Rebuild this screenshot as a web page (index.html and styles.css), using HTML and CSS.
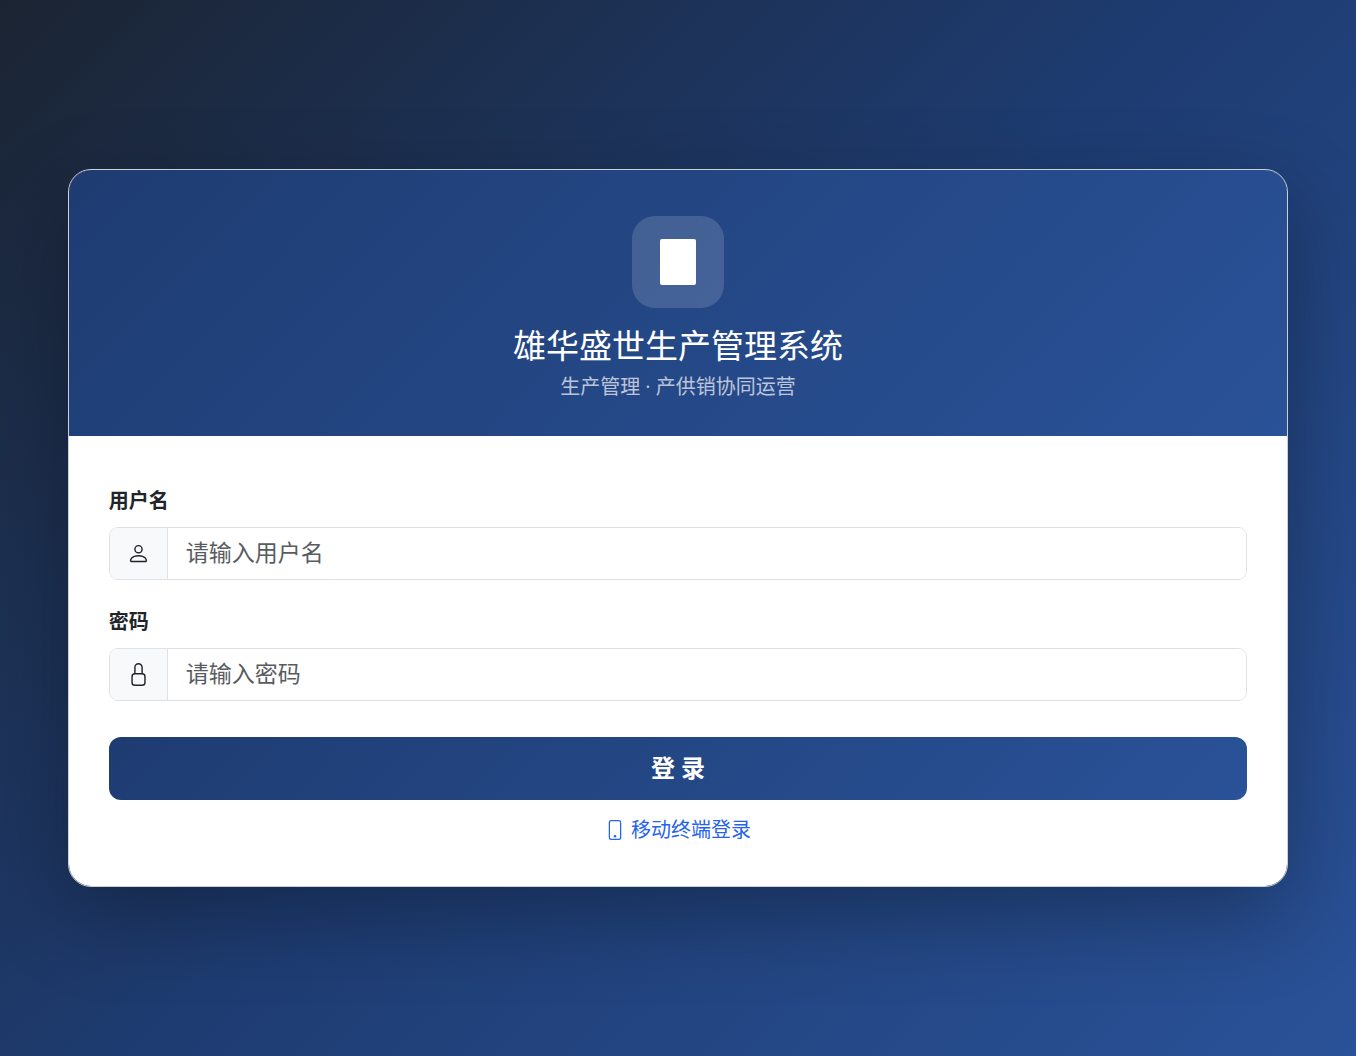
FILE: index.html
```
<!DOCTYPE html>
<html lang="zh-CN">
<head>
<meta charset="utf-8">
<meta name="viewport" content="width=device-width, initial-scale=1">
<title>雄华盛世生产管理系统</title>
<link rel="stylesheet" href="styles.css">
</head>
<body>
<main class="card">
  <header class="card-header">
    <div class="brand">
      <svg class="brand-icon" viewBox="0 0 36 46" aria-hidden="true"><rect width="36" height="46" rx="2" fill="currentColor"/></svg>
    </div>
    <h1 class="title">雄华盛世生产管理系统</h1>
    <p class="subtitle">生产管理 · 产供销协同运营</p>
  </header>
  <form class="card-body">
    <div class="field">
      <label class="label" for="username">用户名</label>
      <div class="input-group">
        <span class="addon">
          <svg class="icon" viewBox="0 0 16 16" fill="currentColor" aria-hidden="true"><path d="M8 8a3 3 0 1 0 0-6 3 3 0 0 0 0 6m2-3a2 2 0 1 1-4 0 2 2 0 0 1 4 0m4 8c0 1-1 1-1 1H3s-1 0-1-1 1-4 6-4 6 3 6 4m-1-.004c-.001-.246-.154-.986-.832-1.664C11.516 10.68 10.289 10 8 10s-3.516.68-4.168 1.332c-.678.678-.83 1.418-.832 1.664z"/></svg>
        </span>
        <input class="input" id="username" type="text" placeholder="请输入用户名">
      </div>
    </div>
    <div class="field">
      <label class="label" for="password">密码</label>
      <div class="input-group">
        <span class="addon">
          <svg class="icon" viewBox="0 0 16 16" fill="none" stroke="currentColor" aria-hidden="true"><rect x="3.500" y="7.500" width="9" height="8" rx="2"/><path d="M5.500 7.500V3a2.500 2.500 0 0 1 5 0v4.500"/></svg>
        </span>
        <input class="input" id="password" type="password" placeholder="请输入密码">
      </div>
    </div>
    <button class="submit" type="submit">登 录</button>
    <a class="mobile-link" href="#">
      <svg class="link-icon" viewBox="0 0 16 16" fill="currentColor" aria-hidden="true"><path d="M11 1a1 1 0 0 1 1 1v12a1 1 0 0 1-1 1H5a1 1 0 0 1-1-1V2a1 1 0 0 1 1-1zM5 0a2 2 0 0 0-2 2v12a2 2 0 0 0 2 2h6a2 2 0 0 0 2-2V2a2 2 0 0 0-2-2z"/><path d="M8 14a1 1 0 1 0 0-2 1 1 0 0 0 0 2"/></svg>
      <span>移动终端登录</span>
    </a>
  </form>
</main>
</body>
</html>
```
FILE: styles.css
```
* {
  box-sizing: border-box;
}

body {
  margin: 0;
  min-height: 100vh;
  display: flex;
  align-items: center;
  justify-content: center;
  background: linear-gradient(135deg, #1b2432 0%, #1e3c72 50%, #2a5298 100%);
  color: #212529;
  font-family: "Open Sans", "Noto Sans CJK SC", sans-serif;
  font-size: 23px;
}

.card {
  width: 90%;
  background: #fff;
  background-clip: padding-box;
  border: 1px solid #cbd0d0;
  border-radius: 23px;
  box-shadow: 0 29px 86px rgba(0, 0, 0, 0.3);
  overflow: hidden;
}

.card-header {
  display: flex;
  flex-direction: column;
  align-items: center;
  padding: 46px 40px 34px;
  background: linear-gradient(135deg, #1e3c72, #2a5298);
  color: #fff;
  text-align: center;
}

.brand {
  display: flex;
  align-items: center;
  justify-content: center;
  width: 92px;
  height: 92px;
  margin-bottom: 18px;
  border-radius: 23px;
  background: rgba(255, 255, 255, 0.15);
}

.brand-icon {
  width: 36px;
  height: 46px;
}

.title {
  margin: 0 0 6px;
  font-size: 33px;
  font-weight: 400;
  line-height: 40px;
}

.subtitle {
  margin: 0;
  font-size: 20px;
  line-height: 30px;
  color: rgba(255, 255, 255, 0.7);
}

.card-body {
  display: flex;
  flex-direction: column;
  padding: 50px 40px 41px;
}

.field {
  margin-bottom: 27px;
}

.label {
  display: block;
  margin-bottom: 11px;
  font-size: 20px;
  font-weight: 700;
  line-height: 30px;
}

.input-group {
  display: flex;
  height: 53px;
  border: 1px solid #dee2e6;
  border-radius: 9px;
  overflow: hidden;
}

.addon {
  display: flex;
  align-items: center;
  justify-content: center;
  width: 58px;
  background: #f8f9fa;
  border-right: 1px solid #dee2e6;
}

.icon {
  width: 23px;
  height: 23px;
}

.input {
  flex: 1;
  min-width: 0;
  padding: 0 18px 4px;
  border: 0;
  outline: 0;
  background: #fff;
  color: #212529;
  font: inherit;
}

.input::placeholder {
  color: #595c5f;
  opacity: 1;
}

.submit {
  height: 63px;
  margin: 9px 0 15px;
  padding: 0 0 4px;
  border: 0;
  border-radius: 12px;
  background: linear-gradient(135deg, #1e3c72, #2a5298);
  color: #fff;
  font: inherit;
  font-size: 24px;
  font-weight: 700;
  cursor: pointer;
}

.mobile-link {
  display: flex;
  align-items: center;
  align-self: center;
  gap: 6px;
  color: #2563eb;
  font-size: 20px;
  line-height: 30px;
  text-decoration: none;
}

.link-icon {
  width: 20px;
  height: 20px;
}
```
